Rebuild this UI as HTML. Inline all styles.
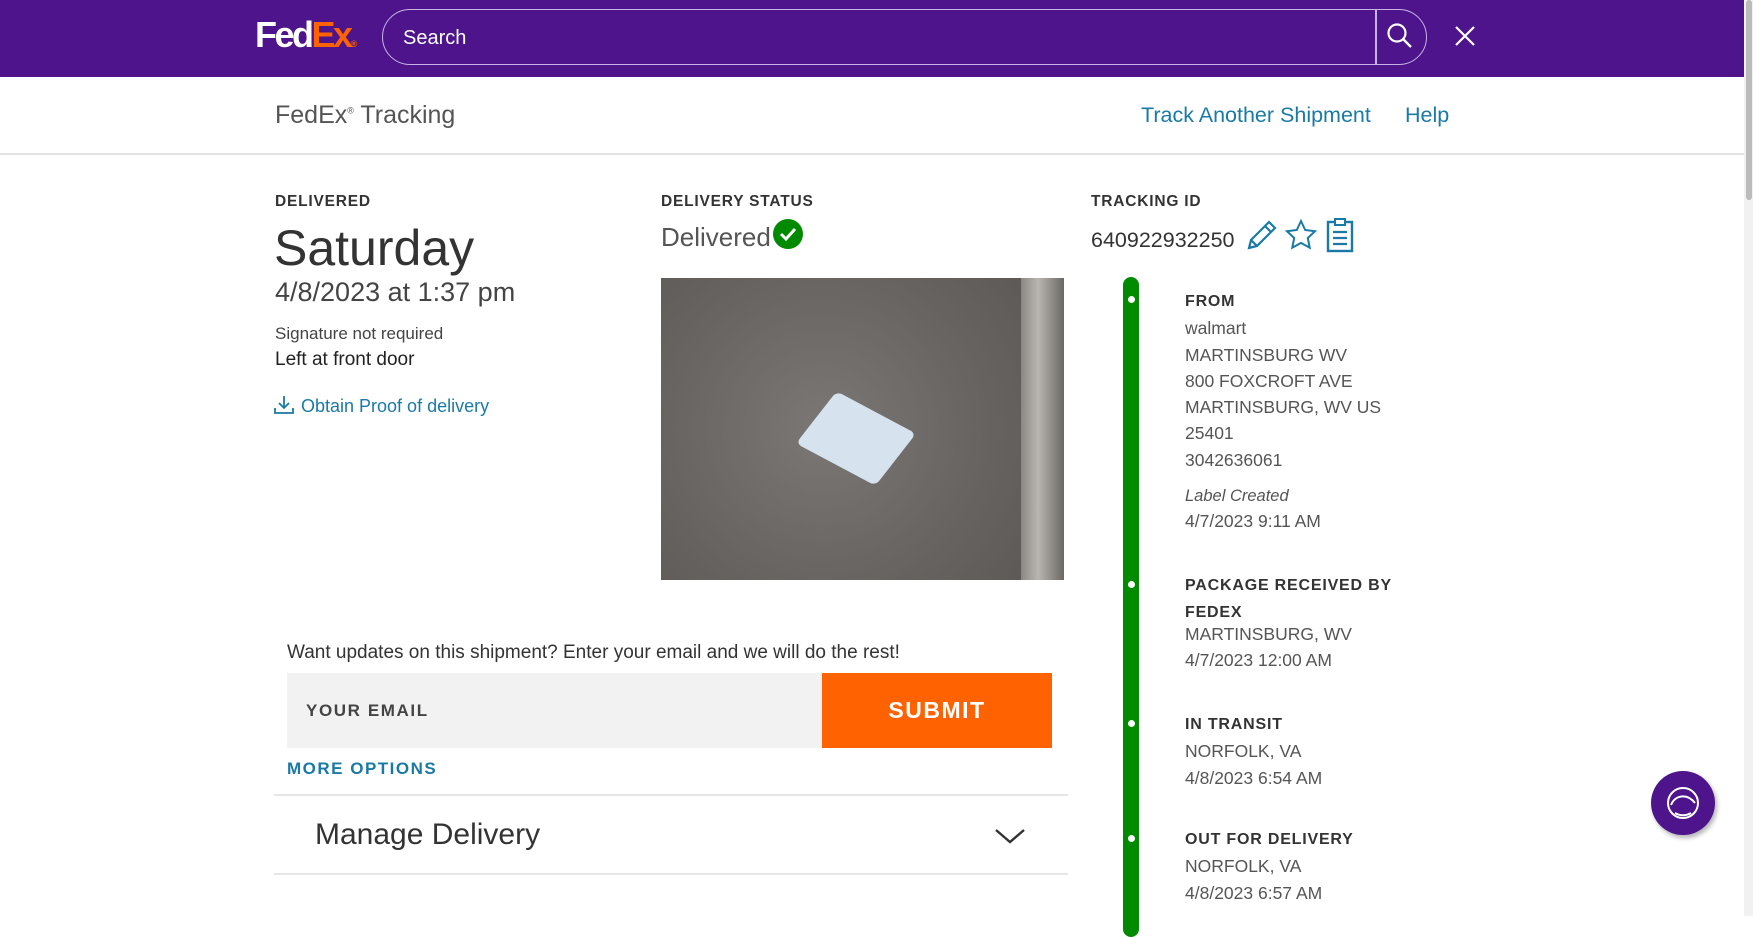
<!DOCTYPE html>
<html><head><meta charset="utf-8"><style>
*{margin:0;padding:0;box-sizing:border-box}
body{width:1753px;height:916px;overflow:hidden;background:#fff;font-family:"Liberation Sans",sans-serif;color:#333;position:relative}
.a{position:absolute;white-space:nowrap}
.lbl{font-weight:bold;font-size:15.5px;letter-spacing:0.8px;color:#333}
.tl{font-size:17.5px;color:#555;line-height:26.3px}
.tl b{color:#333;font-size:16px;letter-spacing:0.8px}
</style></head><body>
<div class="a" style="left:0;top:0;width:1744px;height:77px;background:#4d148c"></div>
<div class="a" style="left:255px;top:14px;font-size:36px;font-weight:bold;letter-spacing:-2.5px;color:#fff">Fed<span style="color:#ff6200">Ex</span><span style="font-size:9px;color:#ff6200;letter-spacing:0">®</span></div>
<div class="a" style="left:382px;top:9px;width:1045px;height:56px;border:1.5px solid #c9b3e6;border-radius:28px"></div>
<div class="a" style="left:1375px;top:9px;width:1.5px;height:56px;background:#c9b3e6"></div>
<div class="a" style="left:403px;top:27px;font-size:20px;color:#fff">Search</div>
<svg class="a" style="left:1386px;top:22px" width="28" height="28" viewBox="0 0 28 28"><circle cx="11" cy="11" r="8.5" fill="none" stroke="#fff" stroke-width="2.2"/><path d="M17 17l8 8" stroke="#fff" stroke-width="2.4"/></svg>
<svg class="a" style="left:1454px;top:25px" width="22" height="22" viewBox="0 0 22 22"><path d="M2 2l18 18M20 2L2 20" stroke="#fff" stroke-width="2.2"/></svg>
<div class="a" style="left:1744px;top:0;width:9px;height:916px;background:#f1f1f1"></div>
<div class="a" style="left:1746px;top:0;width:6px;height:200px;background:#bbb;border-radius:3px"></div>
<div class="a" style="left:0;top:153px;width:1744px;height:1.5px;background:#e3e3e3"></div>
<div class="a" style="left:275px;top:101px;font-size:25px;color:#555">FedEx<sup style="font-size:9px">®</sup> Tracking</div>
<div class="a" style="left:1141px;top:103px;font-size:21.5px;color:#1a7aa6">Track Another Shipment</div>
<div class="a" style="left:1405px;top:103px;font-size:21.5px;color:#1a7aa6">Help</div>

<div class="a lbl" style="left:275px;top:193px">DELIVERED</div>
<div class="a" style="left:274px;top:219px;font-size:50px;color:#333">Saturday</div>
<div class="a" style="left:275px;top:277px;font-size:27px;color:#444">4/8/2023 at 1:37 pm</div>
<div class="a" style="left:275px;top:324px;font-size:17px;color:#444">Signature not required</div>
<div class="a" style="left:275px;top:349px;font-size:19px;color:#222">Left at front door</div>
<svg class="a" style="left:273px;top:394px" width="22" height="22" viewBox="0 0 22 22"><path d="M11 2v12M6 9l5 5 5-5M2 14v5h18v-5" fill="none" stroke="#1a7aa6" stroke-width="1.8"/></svg>
<div class="a" style="left:301px;top:396px;font-size:18px;color:#1a7aa6">Obtain Proof of delivery</div>

<div class="a lbl" style="left:661px;top:193px">DELIVERY STATUS</div>
<div class="a" style="left:661px;top:222px;font-size:26px;color:#555">Delivered</div>
<svg class="a" style="left:772px;top:218px" width="32" height="32" viewBox="0 0 32 32"><circle cx="16" cy="16" r="15" fill="#008a00"/><path d="M9 16l5 5 9-10" fill="none" stroke="#fff" stroke-width="3"/></svg>
<div class="a" style="left:661px;top:278px;width:403px;height:302px;background:radial-gradient(circle at 40% 50%,#7a7775,#66625f 60%,#5a5653);overflow:hidden">
 <div style="position:absolute;left:360px;top:0;width:43px;height:302px;background:linear-gradient(90deg,#8a8885,#b9b6b2 40%,#6a6764)"></div>
 <div style="position:absolute;left:150px;top:128px;width:90px;height:65px;background:#d6e3ee;transform:rotate(28deg) skewX(-10deg);border-radius:6px"></div>
</div>

<div class="a lbl" style="left:1091px;top:193px">TRACKING ID</div>
<div class="a" style="left:1091px;top:228px;font-size:21.5px;color:#333">640922932250</div>
<svg class="a" style="left:1245px;top:218px" width="34" height="34" viewBox="0 0 34 34"><path d="M4 30l2-8L24 4l6 6-18 18zM20 8l6 6M6 22l6 6" fill="none" stroke="#1a7aa6" stroke-width="2.2"/></svg>
<svg class="a" style="left:1284px;top:218px" width="34" height="34" viewBox="0 0 34 34"><path d="M17 3l4.2 9 9.8 1.2-7.2 6.8 1.9 9.7L17 24.9l-8.7 4.8 1.9-9.7L3 13.2 12.8 12z" fill="none" stroke="#1a7aa6" stroke-width="2"/></svg>
<svg class="a" style="left:1326px;top:217px" width="28" height="36" viewBox="0 0 28 36"><rect x="2" y="5" width="24" height="29" fill="none" stroke="#1a7aa6" stroke-width="2.4"/><rect x="9" y="2" width="10" height="6" fill="#fff" stroke="#1a7aa6" stroke-width="2"/><path d="M7 15h14M7 21h14M7 27h14" stroke="#1a7aa6" stroke-width="2.2"/></svg>

<div class="a" style="left:1123px;top:277px;width:16px;height:660px;background:#008a00;border-radius:8px"></div>
<div class="a" style="left:1128px;top:296px;width:7px;height:7px;background:#fff;border-radius:50%"></div>
<div class="a" style="left:1128px;top:581px;width:7px;height:7px;background:#fff;border-radius:50%"></div>
<div class="a" style="left:1128px;top:720px;width:7px;height:7px;background:#fff;border-radius:50%"></div>
<div class="a" style="left:1128px;top:835px;width:7px;height:7px;background:#fff;border-radius:50%"></div>
<div class="a tl" style="left:1185px;top:287px"><b>FROM</b><br>walmart<br>MARTINSBURG WV<br>800 FOXCROFT AVE<br>MARTINSBURG, WV US<br>25401<br>3042636061</div>
<div class="a tl" style="left:1185px;top:483px;font-size:16.5px"><i>Label Created</i></div>
<div class="a tl" style="left:1185px;top:508px">4/7/2023 9:11 AM</div>
<div class="a tl" style="left:1185px;top:572px;line-height:24.5px"><b>PACKAGE RECEIVED BY<br>FEDEX</b></div>
<div class="a tl" style="left:1185px;top:621px">MARTINSBURG, WV<br>4/7/2023 12:00 AM</div>
<div class="a tl" style="left:1185px;top:710px"><b>IN TRANSIT</b><br>NORFOLK, VA<br>4/8/2023 6:54 AM</div>
<div class="a tl" style="left:1185px;top:825px"><b>OUT FOR DELIVERY</b><br>NORFOLK, VA<br>4/8/2023 6:57 AM</div>

<div class="a" style="left:287px;top:642px;font-size:19px;color:#333">Want updates on this shipment? Enter your email and we will do the rest!</div>
<div class="a" style="left:287px;top:673px;width:535px;height:75px;background:#f2f2f2"></div>
<div class="a" style="left:306px;top:701px;font-size:17px;font-weight:bold;letter-spacing:1.6px;color:#444">YOUR EMAIL</div>
<div class="a" style="left:822px;top:673px;width:230px;height:75px;background:#ff6200"></div>
<div class="a" style="left:822px;top:697px;width:230px;text-align:center;font-size:23px;font-weight:bold;letter-spacing:1.5px;color:#fff">SUBMIT</div>
<div class="a" style="left:287px;top:759px;font-size:17px;font-weight:bold;letter-spacing:1.5px;color:#1a7aa6">MORE OPTIONS</div>
<div class="a" style="left:274px;top:794px;width:794px;height:1.5px;background:#e6e6e6"></div>
<div class="a" style="left:315px;top:818px;font-size:30px;color:#333">Manage Delivery</div>
<svg class="a" style="left:994px;top:827px" width="32" height="18" viewBox="0 0 32 18"><path d="M2 3l14 12L30 3" fill="none" stroke="#333" stroke-width="2.4"/></svg>
<div class="a" style="left:274px;top:873px;width:794px;height:1.5px;background:#e6e6e6"></div>

<div class="a" style="left:1651px;top:771px;width:64px;height:64px;border-radius:50%;background:#4d148c;box-shadow:2px 3px 5px rgba(0,0,0,.3)"></div>
<svg class="a" style="left:1663px;top:783px" width="40" height="40" viewBox="0 0 40 40"><circle cx="20" cy="20" r="15" fill="none" stroke="#fff" stroke-width="2"/><path d="M8 22c4-10 16-12 24-2" fill="none" stroke="#fff" stroke-width="2"/><path d="M12 30c5 3 11 3 16 0" fill="none" stroke="#fff" stroke-width="2"/></svg>
</body></html>
